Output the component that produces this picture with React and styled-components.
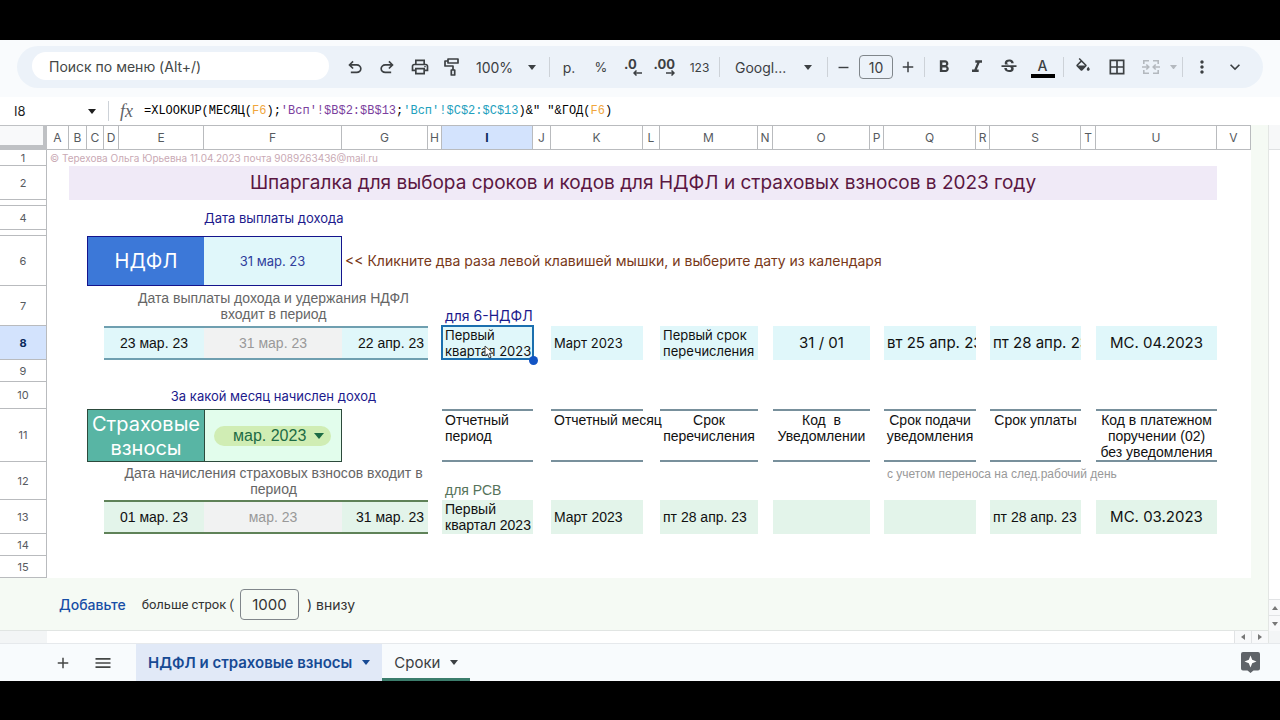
import React from "react";
import styled, { createGlobalStyle, css } from "styled-components";
import {
  MdOutlinePrint, MdFormatBold, MdFormatItalic, MdStrikethroughS, MdBorderAll,
  MdMoreVert, MdKeyboardArrowDown, MdAdd, MdRemove, MdMenu,
} from "react-icons/md";

const UI = `Inter, "Open Sans", sans-serif`;
const ARIAL = `"Liberation Sans", Arial, sans-serif`;
const MONO = `"Liberation Mono", monospace`;

const Global = createGlobalStyle`
  *, *::before, *::after { box-sizing: border-box; }
  body { margin: 0; background: #000; font-family: ${UI}; color: #1f1f1f; }
  button, input, select { font: inherit; color: inherit; margin: 0; padding: 0; border: 0; background: none; appearance: none; outline: 0; }
  button, select { cursor: pointer; }
`;

const Screen = styled.div`
  min-height: 100vh;
  padding: 40px 0 39px;
  display: flex;
  flex-direction: column;
`;
const Workspace = styled.main`
  flex: 1;
  display: flex;
  flex-direction: column;
  background: #f9fbfd;
`;

/* ---------- toolbar ---------- */
const ToolbarArea = styled.div`
  padding: 6px 17px 9px;
`;
const Toolbar = styled.div`
  height: 42px;
  display: flex;
  align-items: center;
  padding: 0 12px 0 15px;
  border-radius: 21px;
  background: #ecf2f9;
  color: #3c4043;
`;
const Search = styled.input`
  width: 297px;
  height: 28px;
  margin: 0 10px 2px 0;
  padding: 0 17px;
  border-radius: 14px;
  background: #fff;
  font-size: 14px;
  &::placeholder { color: #444746; opacity: 1; }
`;
const Tool = styled.button`
  width: ${(p) => p.$w || 32}px;
  height: 32px;
  display: flex;
  align-items: center;
  justify-content: center;
  font-size: ${(p) => p.$size || 14}px;
  color: ${(p) => (p.$muted ? "#b4b9bf" : "inherit")};
  ${(p) => p.$end && "margin-left: auto;"}
`;
const Divider = styled.span`
  width: 1px;
  height: 20px;
  margin: 0 ${(p) => p.$gap || 0}px;
  background: #cdd2d8;
`;
const Picker = styled.label`
  width: ${(p) => p.$w}px;
  padding: 0 ${(p) => p.$r}px 0 ${(p) => p.$l}px;
  display: flex;
  align-items: center;
  justify-content: space-between;
  font-size: ${(p) => p.$size || 14}px;
`;
const SizeBox = styled.input`
  width: 34px;
  height: 24px;
  border: 1px solid #80868b;
  border-radius: 4px;
  text-align: center;
  font-size: 14px;
`;
const Decimal = styled.span`
  display: flex;
  flex-direction: column;
  align-items: ${(p) => (p.$left ? "flex-start" : "flex-end")};
  width: 18px;
  font-size: 13px;
  font-weight: 700;
  line-height: 12px;
  svg { align-self: flex-end; }
`;
const FontColor = styled.span`
  display: flex;
  flex-direction: column;
  align-items: center;
  width: 24px;
  padding-top: 2px;
  font-size: 14px;
  line-height: 16px;
  font-weight: 500;
  border-bottom: 4px solid #000;
`;

/* ---------- formula bar ---------- */
const FormulaBar = styled.div`
  height: 28px;
  display: flex;
  align-items: center;
  background: #fff;
`;
const NameBox = styled.label`
  width: 108px;
  padding: 0 12px 0 14px;
  display: flex;
  align-items: center;
  justify-content: space-between;
  input { width: 64px; font-size: 13px; }
`;
const Fx = styled.span`
  width: 35px;
  padding-left: 11px;
  font: italic 18px/20px "Liberation Serif", serif;
  color: #5f6368;
`;
const Formula = styled.div`
  flex: 1;
  font: 12px/20px ${MONO};
  white-space: pre;
  color: #000;
  outline: 0;
`;
const Token = styled.span`color: ${(p) => p.$c};`;

/* ---------- sheet ---------- */
const SheetArea = styled.div`
  flex: 1;
  display: flex;
  background: #f5faf4;
`;
const SheetMain = styled.div`
  flex: 1;
  min-width: 0;
  display: flex;
  flex-direction: column;
`;
const GridWrap = styled.div`
  padding-right: 18px;
`;
const Grid = styled.table`
  width: 100%;
  table-layout: fixed;
  border-collapse: separate;
  border-spacing: 0;
  background: #fff;
`;
const Corner = styled.td`
  height: 25px;
  padding: 0;
  background: #f8f9fa;
  border: solid #bfc1c4;
  border-width: 1px 4px 5px 0;
`;
const ColHead = styled.th`
  height: 25px;
  padding: 0;
  border: solid #b9bbbe;
  border-width: 1px 1px 1px 0;
  font-size: 12px;
  font-weight: ${(p) => (p.$on ? 700 : 400)};
  color: ${(p) => (p.$on ? "#0b2a5c" : "#575b5f")};
  background: ${(p) => (p.$on ? "#d3e3fd" : "#fff")};
`;
const RowHead = styled.th`
  height: ${(p) => p.$h}px;
  padding: 0;
  border: solid #b9bbbe;
  border-width: 0 1px 1px 0;
  font-size: ${(p) => (p.$h < 10 ? 0 : 11)}px;
  line-height: ${(p) => (p.$h < 10 ? 0 : 14)}px;
  font-weight: ${(p) => (p.$on ? 700 : 400)};
  color: ${(p) => (p.$on ? "#0b2a5c" : "#575b5f")};
  background: ${(p) => (p.$on ? "#d3e3fd" : "#fff")};
`;
const Cell = styled.td`
  padding: ${(p) => p.$top || 0}px 0 0;
  ${(p) => p.$align === "left" && "padding-left: 3px;"}
  ${(p) => p.$align === "right" && "padding-right: 4px;"}
  font-family: ${(p) => (p.$arial ? ARIAL : UI)};
  font-size: ${(p) => p.$size || 14}px;
  line-height: ${(p) => p.$lh || 16}px;
  text-align: ${(p) => p.$align || "center"};
  vertical-align: ${(p) => p.$v || (p.$top ? "top" : "middle")};
  color: ${(p) => p.$c || "#111"};
  background: ${(p) => p.$bg || "transparent"};
  white-space: ${(p) => (p.$wrap ? "pre-line" : "pre")};
  overflow: ${(p) => (p.$clip ? "hidden" : "visible")};
  ${(p) => p.$lines && css`
    border-top: 2px solid ${p.$lines};
    border-bottom: 2px solid ${p.$lines};
  `}
  ${(p) => p.$box && css`
    border: solid ${p.$box};
    border-width: 1px ${p.$last ? 1 : 0}px 1px ${p.$first ? 1 : 0}px;
  `}
`;
const ActiveCell = styled(Cell)`
  position: relative;
  &::before {
    content: "";
    position: absolute;
    inset: -1px -1px 0 -1px;
    border: 2px solid #1b6fae;
  }
  &::after {
    content: "";
    position: absolute;
    right: -5px;
    bottom: -5px;
    width: 9px;
    height: 9px;
    border-radius: 50%;
    background: #1254c4;
  }
`;
const Pointer = styled.svg`
  position: absolute;
  left: 42px;
  top: 19px;
`;
const Chip = styled.label`
  display: flex;
  align-items: center;
  justify-content: space-between;
  height: 20px;
  margin: 0 10px 0 9px;
  padding: 0 7px 0 19px;
  border-radius: 10px;
  background: #d0edb4;
  color: #1d6b45;
  font-family: ${ARIAL};
  font-size: 16px;
`;

/* ---------- below the grid ---------- */
const AddRows = styled.form`
  flex: 1;
  min-height: 53px;
  display: flex;
  align-items: center;
  padding-left: 59px;
  font-size: 14px;
  color: #333;
  border-bottom: 1px solid #e1e5e3;
`;
const AddButton = styled.button`
  margin-right: 16px;
  font-size: 14px;
  font-weight: 500;
  color: #174ea6;
`;
const CountBox = styled.input`
  width: 59px;
  height: 31px;
  margin: 0 8px 0 6px;
  border: 1px solid #80868b;
  border-radius: 4px;
  text-align: center;
  font-size: 15px;
`;
const MoreLabel = styled.label`
  font-family: Roboto, sans-serif;
  font-size: 13px;
`;
const HScroll = styled.div`
  height: 12px;
  display: flex;
  justify-content: flex-end;
  background: linear-gradient(to right, #f3f5f6 47px, #fff 47px);
`;
const VScroll = styled.div`
  width: 12px;
  display: flex;
  flex-direction: column;
  border-left: 1px solid #e3e6e4;
  background: #fff;
`;
const VHead = styled.div`
  height: 25px;
  background: #f7f8f9;
  border-bottom: 1px solid #dfe1e3;
`;
const ScrollButton = styled.button`
  width: ${(p) => p.$w}px;
  height: ${(p) => p.$h}px;
  display: flex;
  align-items: center;
  justify-content: center;
  background: #f8f9fa;
  border: solid #e1e3e5;
  border-width: ${(p) => (p.$v ? "1px 0 0" : "0 0 0 1px")};
  ${(p) => p.$push && "margin-top: auto;"}
`;
const ScrollEnd = styled.div`
  height: 12px;
  background: #f3f5f6;
`;

/* ---------- sheet tabs ---------- */
const Tabs = styled.nav`
  height: 38px;
  display: flex;
  align-items: center;
  padding: 0 20px 0 46px;
  border-top: 1px solid #e6e9ec;
  background: #f8fbfd;
`;
const TabTool = styled.button`
  width: ${(p) => p.$w}px;
  display: flex;
  justify-content: center;
  color: #444746;
  ${(p) => p.$end && "margin-left: auto;"}
`;
const TabList = styled.div`
  align-self: stretch;
  display: flex;
  margin-left: 10px;
`;
const Tab = styled.button`
  display: flex;
  align-items: center;
  gap: 10px;
  padding: 0 12px;
  font-size: 15px;
  font-weight: ${(p) => (p.$on ? 600 : 400)};
  color: ${(p) => (p.$on ? "#174a94" : "#3c4043")};
  background: ${(p) => (p.$on ? "#e1e9f7" : "transparent")};
  border: solid transparent;
  border-width: 3px 0;
  border-bottom-color: ${(p) => (p.$on ? "transparent" : "#3c7d6c")};
`;

const Caret = ({ size = 8, color = "currentColor" }) => (
  <svg width={size} height={size / 2 + 1} viewBox="0 0 10 6" preserveAspectRatio="none" aria-hidden="true">
    <path d="M0 0h10L5 6z" fill={color} />
  </svg>
);
const Symbol = ({ d }) => (
  <svg width="20" height="20" viewBox="0 -980 960 960" fill="currentColor" aria-hidden="true"><path d={d} /></svg>
);
const UNDO = "M280-200v-80h284q63 0 109.5-40T720-420q0-60-46.5-100T564-560H312l104 104-56 56-200-200 200-200 56 56-104 104h252q97 0 166.5 63T800-420q0 94-69.5 157T564-200H280Z";
const REDO = "M396-200q-97 0-166.5-63T160-420q0-94 69.5-157T396-640h252L544-744l56-56 200 200-200 200-56-56 104-104H396q-63 0-109.5 40T240-420q0 60 46.5 100T396-280h284v80H396Z";
const Roller = () => (
  <svg width="18" height="20" viewBox="0 0 18 20" fill="none" stroke="currentColor" strokeWidth="1.7" strokeLinejoin="round" aria-hidden="true">
    <path d="M5 2h10v4H5zM5 4H2v5h8v4M8.3 13h3.4v5H8.3z" />
  </svg>
);
const Bucket = () => (
  <svg width="18" height="18" viewBox="0 0 24 24" fill="currentColor" aria-hidden="true">
    <path d="M16.560 8.940L7.620 0 6.210 1.410l2.380 2.380-5.150 5.150c-.59.59-.59 1.540 0 2.120l5.500 5.500c.29.29.68.44 1.060.44s.77-.15 1.060-.44l5.500-5.500c.59-.58.59-1.530 0-2.120zM5.210 10L10 5.210 14.790 10H5.210zM19 11.500s-2 2.170-2 3.500c0 1.100.9 2 2 2s2-.9 2-2c0-1.330-2-3.500-2-3.500z" />
  </svg>
);
const Arrow = ({ flip }) => (
  <svg width="9" height="6" viewBox="0 0 9 6" fill="none" stroke="currentColor" strokeWidth="1.5" aria-hidden="true">
    <path d={flip ? "M0 3h8M5.5 .5 8 3 5.5 5.5" : "M9 3H1M3.5 .5 1 3l2.5 2.5"} />
  </svg>
);
const Merge = () => (
  <svg width="18" height="16" viewBox="0 0 18 16" fill="none" stroke="currentColor" strokeWidth="1.6" aria-hidden="true">
    <path d="M7 1.8H1.8V5M1.8 11v3.2H7M11 1.8h5.2V5M16.2 11v3.2H11M0 8h6.5M4.3 5.5 6.8 8l-2.5 2.5M18 8h-6.5M13.7 5.5 11.2 8l2.5 2.5" />
  </svg>
);
const Explore = () => (
  <svg width="19" height="21" viewBox="0 0 19 21" aria-hidden="true">
    <path d="M2 0h15a2 2 0 0 1 2 2v14.500a2 2 0 0 1-2 2h-4.500L9.500 21l-3-2.500H2a2 2 0 0 1-2-2V2a2 2 0 0 1 2-2z" fill="#5f6368" />
    <path d="M9.500 3.500 11.200 7.800 15.500 9.500 11.200 11.200 9.500 15.500 7.800 11.200 3.500 9.500 7.800 7.800z" fill="#fff" />
  </svg>
);

const COLS = [47, 22, 18, 17, 15, 85, 138, 86, 14, 91, 18, 92, 17, 98, 15, 97, 14, 92, 14, 91, 15, 121, 34];
const LETTERS = "ABCDEFGHIJKLMNOPQRSTUV".split("");

const CYAN = "#e0f7fa";
const MINT = "#e3f4ea";
const GREY = "#f1f2f2";
const SLATE = "#78909c";

export default function App() {
  return (
    <Screen>
      <Global />
      <Workspace>
        <ToolbarArea>
          <Toolbar role="toolbar" aria-label="Панель инструментов">
            <Search placeholder="Поиск по меню (Alt+/)" aria-label="Поиск по меню" />
            <Tool aria-label="Отменить"><Symbol d={UNDO} /></Tool>
            <Tool aria-label="Повторить"><Symbol d={REDO} /></Tool>
            <Tool $w={33} aria-label="Печать"><MdOutlinePrint size={20} /></Tool>
            <Tool $w={31} aria-label="Копировать форматирование"><Roller /></Tool>
            <Picker $w={82} $l={9} $r={13}>
              <select aria-label="Масштаб"><option>100%</option></select>
              <Caret />
            </Picker>
            <Divider />
            <Tool $w={38} aria-label="Формат денежный">р.</Tool>
            <Tool $w={26} $size={13} aria-label="Процентный формат">%</Tool>
            <Tool $w={38} aria-label="Меньше знаков"><Decimal $left>.0<Arrow /></Decimal></Tool>
            <Tool $w={28} aria-label="Больше знаков"><Decimal>.00<Arrow flip /></Decimal></Tool>
            <Tool $w={39} $size={12} aria-label="Другие форматы">123</Tool>
            <Divider />
            <Picker $w={107} $l={15} $r={15}>
              <select aria-label="Шрифт"><option>Googl...</option></select>
              <Caret />
            </Picker>
            <Divider />
            <Tool $w={31} aria-label="Уменьшить размер"><MdRemove size={17} /></Tool>
            <SizeBox defaultValue="10" aria-label="Размер шрифта" />
            <Tool $w={30} aria-label="Увеличить размер"><MdAdd size={18} /></Tool>
            <Divider $gap={1} />
            <Tool $w={35} aria-label="Полужирный"><MdFormatBold size={20} /></Tool>
            <Tool aria-label="Курсив"><MdFormatItalic size={20} /></Tool>
            <Tool aria-label="Зачеркнутый"><MdStrikethroughS size={20} /></Tool>
            <Tool $w={35} aria-label="Цвет текста"><FontColor>A</FontColor></Tool>
            <Divider $gap={3} />
            <Tool aria-label="Цвет заливки"><Bucket /></Tool>
            <Tool $w={36} aria-label="Границы"><MdBorderAll size={20} /></Tool>
            <Tool $muted aria-label="Объединить ячейки"><Merge /></Tool>
            <Tool $w={12} $muted aria-label="Способ объединения"><Caret size={7} /></Tool>
            <Divider $gap={3} />
            <Tool aria-label="Ещё"><MdMoreVert size={20} /></Tool>
            <Tool $end aria-label="Скрыть меню"><MdKeyboardArrowDown size={20} /></Tool>
          </Toolbar>
        </ToolbarArea>

        <FormulaBar>
          <NameBox>
            <input defaultValue="I8" aria-label="Имя ячейки" />
            <Caret />
          </NameBox>
          <Divider />
          <Fx>fx</Fx>
          <Formula role="textbox" aria-label="Формула">
            =XLOOKUP(МЕСЯЦ(<Token $c="#f0a63c">F6</Token>);<Token $c="#7b3f9e">'Всп'!$B$2:$B$13</Token>;<Token $c="#22a0bd">'Всп'!$C$2:$C$13</Token>)&amp;" "&amp;ГОД(<Token $c="#f0a63c">F6</Token>)
          </Formula>
        </FormulaBar>

        <SheetArea>
          <SheetMain>
            <GridWrap>
              <Grid>
                <colgroup>{COLS.map((w, i) => <col key={i} width={w} />)}</colgroup>
                <thead>
                  <tr>
                    <Corner />
                    {LETTERS.map((l) => <ColHead key={l} scope="col" $on={l === "I"}>{l}</ColHead>)}
                  </tr>
                </thead>
                <tbody>
                  <tr>
                    <RowHead scope="row" $h={16}>1</RowHead>
                    <Cell colSpan={22} $align="left" $size={10} $lh={14} $c="#c9a9b4">© Терехова Ольга Юрьевна 11.04.2023 почта 9089263436@mail.ru</Cell>
                  </tr>
                  <tr>
                    <RowHead scope="row" $h={34}>2</RowHead>
                    <Cell />
                    <Cell colSpan={20} $size={19} $lh={24} $c="#5b1742" $bg="#f0eaf7">Шпаргалка для выбора сроков и кодов для НДФЛ и страховых взносов в 2023 году</Cell>
                    <Cell />
                  </tr>
                  <tr><RowHead scope="row" $h={6} /><Cell colSpan={22} /></tr>
                  <tr>
                    <RowHead scope="row" $h={24}>4</RowHead>
                    <Cell colSpan={5} />
                    <Cell $size={13} $c="#1c1a8c">Дата выплаты дохода</Cell>
                    <Cell colSpan={16} />
                  </tr>
                  <tr><RowHead scope="row" $h={6} /><Cell colSpan={22} /></tr>
                  <tr>
                    <RowHead scope="row" $h={50}>6</RowHead>
                    <Cell colSpan={2} />
                    <Cell colSpan={3} $size={20} $lh={24} $c="#fff" $bg="#3c78d8" $box="#14148c" $first>НДФЛ</Cell>
                    <Cell $size={13} $c="#30409c" $bg={CYAN} $box="#14148c" $last>31 мар. 23</Cell>
                    <Cell colSpan={16} $align="left" $c="#783818">{"<< Кликните два раза левой клавишей мышки, и выберите дату из календаря"}</Cell>
                  </tr>
                  <tr>
                    <RowHead scope="row" $h={40}>7</RowHead>
                    <Cell colSpan={4} />
                    <Cell colSpan={3} $arial $wrap $c="#666">{"Дата выплаты дохода и удержания НДФЛ\nвходит в период"}</Cell>
                    <Cell />
                    <Cell colSpan={2} $align="left" $v="bottom" $c="#1c1a8c" $lh={20}>для 6-НДФЛ</Cell>
                    <Cell colSpan={12} />
                  </tr>
                  <tr>
                    <RowHead scope="row" $h={34} $on>8</RowHead>
                    <Cell colSpan={3} />
                    <Cell colSpan={2} $arial $bg={CYAN} $lines="#6f9fb0">23 мар. 23</Cell>
                    <Cell $arial $c="#999" $bg={GREY} $lines="#6f9fb0">31 мар. 23</Cell>
                    <Cell $arial $align="right" $bg={CYAN} $lines="#6f9fb0">22 апр. 23</Cell>
                    <Cell />
                    <ActiveCell $align="left" $size={13} $bg={CYAN} $wrap>
                      {"Первый\nквартал 2023"}
                      <Pointer width="10" height="14" viewBox="0 0 10 14" aria-hidden="true">
                        <path d="M1 1v10l2.5-2 1.8 4 1.800-.8-1.800-3.900H9z" fill="#fff" stroke="#444" strokeWidth="1" />
                      </Pointer>
                    </ActiveCell>
                    <Cell />
                    <Cell $align="left" $size={13} $bg={CYAN}>Март 2023</Cell>
                    <Cell />
                    <Cell $align="left" $size={13} $bg={CYAN} $wrap>{"Первый срок\nперечисления"}</Cell>
                    <Cell />
                    <Cell $size={15} $bg={CYAN}>31 / 01</Cell>
                    <Cell />
                    <Cell $align="left" $size={15} $bg={CYAN} $clip>вт 25 апр. 23</Cell>
                    <Cell />
                    <Cell $align="left" $size={15} $bg={CYAN} $clip>пт 28 апр. 23</Cell>
                    <Cell />
                    <Cell $size={15} $bg={CYAN}>МС. 04.2023</Cell>
                    <Cell />
                  </tr>
                  <tr><RowHead scope="row" $h={22}>9</RowHead><Cell colSpan={22} /></tr>
                  <tr>
                    <RowHead scope="row" $h={27}>10</RowHead>
                    <Cell colSpan={4} />
                    <Cell colSpan={3} $size={13} $c="#1c1a8c">За какой месяц начислен доход</Cell>
                    <Cell colSpan={15} />
                  </tr>
                  <tr>
                    <RowHead scope="row" $h={53}>11</RowHead>
                    <Cell colSpan={2} />
                    <Cell colSpan={3} $size={20} $lh={24} $c="#fff" $bg="#58b5a4" $box="#2c4a3c" $first $wrap>{"Страховые\nвзносы"}</Cell>
                    <Cell $bg="#e2fdec" $box="#2c4a3c" $first $last>
                      <Chip>
                        <select aria-label="Месяц начисления"><option>мар. 2023</option></select>
                        <Caret size={10} />
                      </Chip>
                    </Cell>
                    <Cell colSpan={2} />
                    <Cell $arial $align="left" $top={1} $wrap $lines={SLATE}>{"Отчетный\nпериод"}</Cell>
                    <Cell />
                    <Cell $arial $align="left" $top={1} $lines={SLATE}>Отчетный месяц</Cell>
                    <Cell />
                    <Cell $arial $top={1} $wrap $lines={SLATE}>{"Срок\nперечисления"}</Cell>
                    <Cell />
                    <Cell $arial $top={1} $lines={SLATE}>{"Код  в\nУведомлении"}</Cell>
                    <Cell />
                    <Cell $arial $top={1} $wrap $lines={SLATE}>{"Срок подачи\nуведомления"}</Cell>
                    <Cell />
                    <Cell $arial $top={1} $lines={SLATE}>Срок уплаты</Cell>
                    <Cell />
                    <Cell $arial $top={1} $wrap $lines={SLATE}>{"Код в платежном\nпоручении (02)\nбез уведомления"}</Cell>
                    <Cell />
                  </tr>
                  <tr>
                    <RowHead scope="row" $h={38}>12</RowHead>
                    <Cell colSpan={4} />
                    <Cell colSpan={3} $arial $wrap $c="#666">{"Дата начисления страховых взносов входит в\nпериод"}</Cell>
                    <Cell />
                    <Cell $arial $align="left" $v="bottom" $lh={20} $c="#56735a">для РСВ</Cell>
                    <Cell colSpan={7} />
                    <Cell colSpan={6} $arial $align="left" $top={4} $size={12} $c="#999">с учетом переноса на след.рабочий день</Cell>
                  </tr>
                  <tr>
                    <RowHead scope="row" $h={34}>13</RowHead>
                    <Cell colSpan={3} />
                    <Cell colSpan={2} $arial $bg={MINT} $lines="#5f8258">01 мар. 23</Cell>
                    <Cell $arial $c="#999" $bg={GREY} $lines="#5f8258">мар. 23</Cell>
                    <Cell $arial $align="right" $bg={MINT} $lines="#5f8258">31 мар. 23</Cell>
                    <Cell />
                    <Cell $arial $align="left" $bg={MINT} $wrap>{"Первый\nквартал 2023"}</Cell>
                    <Cell />
                    <Cell $arial $align="left" $bg={MINT}>Март 2023</Cell>
                    <Cell />
                    <Cell $arial $align="left" $bg={MINT}>пт 28 апр. 23</Cell>
                    <Cell />
                    <Cell $bg={MINT} />
                    <Cell />
                    <Cell $bg={MINT} />
                    <Cell />
                    <Cell $arial $align="left" $bg={MINT}>пт 28 апр. 23</Cell>
                    <Cell />
                    <Cell $size={15} $bg={MINT}>МС. 03.2023</Cell>
                    <Cell />
                  </tr>
                  <tr><RowHead scope="row" $h={22}>14</RowHead><Cell colSpan={22} /></tr>
                  <tr><RowHead scope="row" $h={22}>15</RowHead><Cell colSpan={22} /></tr>
                </tbody>
              </Grid>
            </GridWrap>
            <AddRows onSubmit={(e) => e.preventDefault()}>
              <AddButton>Добавьте</AddButton>
              <MoreLabel htmlFor="rows">больше строк (</MoreLabel>
              <CountBox id="rows" defaultValue="1000" />
              <span>) внизу</span>
            </AddRows>
            <HScroll>
              <ScrollButton type="button" $w={17} $h={12} aria-label="Влево">
                <svg width="4" height="6" viewBox="0 0 4 6"><path d="M4 0v6L0 3z" fill="#777" /></svg>
              </ScrollButton>
              <ScrollButton type="button" $w={17} $h={12} aria-label="Вправо">
                <svg width="4" height="6" viewBox="0 0 4 6"><path d="M0 0v6l4-3z" fill="#777" /></svg>
              </ScrollButton>
            </HScroll>
          </SheetMain>
          <VScroll>
            <VHead />
            <ScrollButton type="button" $v $push $w={11} $h={16} aria-label="Вверх">
              <svg width="6" height="4" viewBox="0 0 6 4"><path d="M0 4h6L3 0z" fill="#777" /></svg>
            </ScrollButton>
            <ScrollButton type="button" $v $w={11} $h={16} aria-label="Вниз">
              <svg width="6" height="4" viewBox="0 0 6 4"><path d="M0 0h6L3 4z" fill="#777" /></svg>
            </ScrollButton>
            <ScrollEnd />
          </VScroll>
        </SheetArea>

        <Tabs aria-label="Листы">
          <TabTool $w={34} aria-label="Добавить лист"><MdAdd size={18} /></TabTool>
          <TabTool $w={46} aria-label="Все листы"><MdMenu size={20} /></TabTool>
          <TabList>
            <Tab $on>НДФЛ и страховые взносы <Caret /></Tab>
            <Tab>Сроки <Caret /></Tab>
          </TabList>
          <TabTool $end $w={20} aria-label="Анализ данных"><Explore /></TabTool>
        </Tabs>
      </Workspace>
    </Screen>
  );
}
